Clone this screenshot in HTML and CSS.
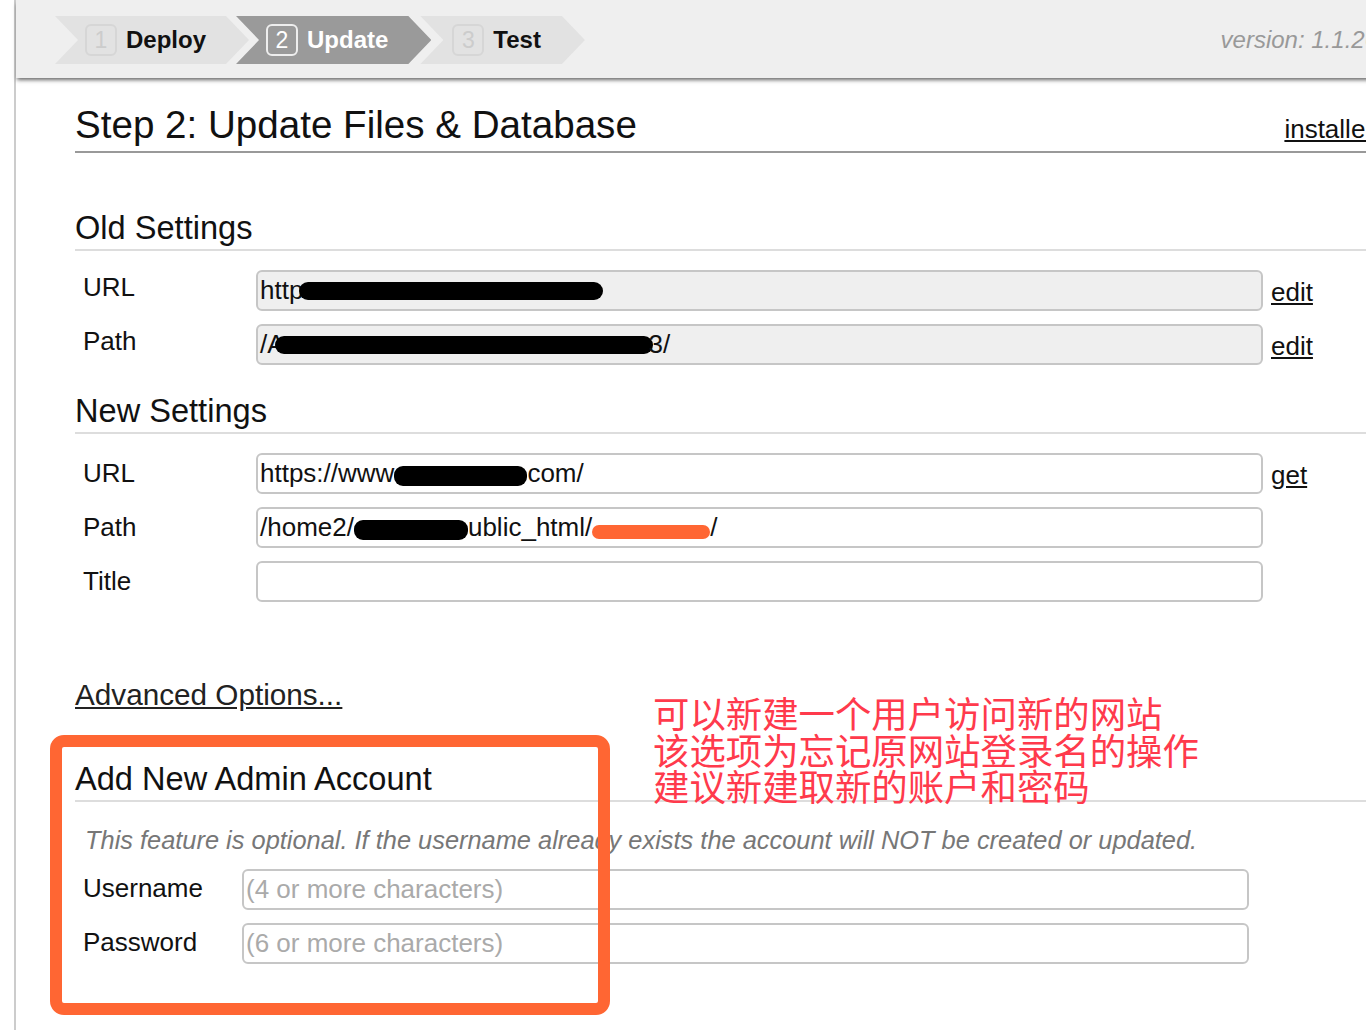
FILE: index.html
```html
<!DOCTYPE html>
<html lang="en">
<head>
    <meta charset="UTF-8">
    <meta name="viewport" content="width=device-width, initial-scale=1.0">
    <title>Installer - Update</title>
    <link rel="stylesheet" href="styles.css">
</head>
<body>
    <div class="page">
        <div class="topbar">
            <div class="steps">
                <div class="step"><span class="num">1</span>Deploy</div>
                <div class="step active"><span class="num">2</span>Update</div>
                <div class="step last"><span class="num">3</span>Test</div>
            </div>
            <div class="version">version: 1.1.26</div>
        </div>

        <div class="content">
            <div class="title-row">
                <h1>Step 2: Update Files &amp; Database</h1>
                <a href="#" class="installer">installer</a>
            </div>

            <h2 class="section first">Old Settings</h2>
            <div class="fields">
                <div class="lbl">URL</div>
                <div class="box readonly">http<span class="redact r1"></span></div>
                <a href="#" class="act">edit</a>

                <div class="lbl">Path</div>
                <div class="box readonly">/A<span class="redact r2"></span>3/</div>
                <a href="#" class="act">edit</a>
            </div>

            <h2 class="section">New Settings</h2>
            <div class="fields new-fields">
                <div class="lbl">URL</div>
                <div class="box">https://www<span class="redact r3"></span>com/</div>
                <a href="#" class="act">get</a>

                <div class="lbl">Path</div>
                <div class="box">/home2/<span class="redact r4"></span>ublic_html/<span class="redact orange"></span>/</div>
                <span></span>

                <div class="lbl">Title</div>
                <div class="box"></div>
                <span></span>
            </div>

            <p class="advanced"><a href="#">Advanced Options...</a></p>

            <h2 class="section admin">Add New Admin Account</h2>
            <p class="hint">This feature is optional. If the username already exists the account will NOT be created or updated.</p>
            <div class="fields admin-fields">
                <div class="lbl">Username</div>
                <div class="box"><span class="placeholder">(4 or more characters)</span></div>
                <span></span>

                <div class="lbl">Password</div>
                <div class="box"><span class="placeholder">(6 or more characters)</span></div>
                <span></span>
            </div>
        </div>

        <!-- annotation drawn on top of the screenshot -->
        <div class="mark-box"></div>
        <p class="note-cn">可以新建一个用户访问新的网站<br>该选项为忘记原网站登录名的操作<br>建议新建取新的账户和密码</p>
    </div>
</body>
</html>
```

FILE: styles.css
```css
@charset "UTF-8";
html{
    overflow: hidden;
}
body{
    margin: 0;
    background-color: #fff;
    color: #111;
    font-family: "Liberation Sans", Arial, sans-serif;
}
a{
    color: #111;
}
.page{
    position: relative;
    margin-left: 14px;
    border-left: 2px solid #ccc;
    width: 1400px;
    min-height: 1030px;
}

/* top bar with the wizard steps */
.topbar{
    position: relative;
    display: flex;
    align-items: flex-start;
    height: 78px;
    background-color: #efefef;
    box-shadow: 0 3px 4px -1px rgba(0, 0, 0, 0.6);
}
.steps{
    display: flex;
    padding: 16px 0 0 39px;
}
.step{
    display: flex;
    align-items: center;
    gap: 9px;
    height: 48px;
    padding: 0 43px 0 30px;
    background-color: #e2e2e2;
    font-size: 24px;
    font-weight: bold;
    clip-path: polygon(0 0, calc(100% - 23px) 0, 100% 50%, calc(100% - 23px) 100%, 0 100%, 23px 50%);
}
.step + .step{
    margin-left: -13px;
}
.step.last{
    margin-left: -11px;
    padding-left: 32px;
    padding-right: 44px;
}
.step.active{
    background-color: #9a9a9a;
    color: #fff;
}
.num{
    display: flex;
    align-items: center;
    justify-content: center;
    width: 32px;
    height: 32px;
    box-sizing: border-box;
    border: 2px solid #d6d6d6;
    border-radius: 6px;
    color: #ccc;
    font-size: 23px;
    font-weight: normal;
}
.step.active .num{
    border-color: #eee;
    color: #fff;
}
.version{
    margin-left: auto;
    padding: 26px 38px 0 0;
    color: #999;
    font-size: 24px;
    font-style: italic;
    line-height: 28px;
}

/* main form */
.content{
    padding: 25px 42px 0 59px;
}
.title-row{
    display: flex;
    justify-content: space-between;
    align-items: baseline;
    padding-bottom: 4px;
    border-bottom: 2px solid #999;
}
h1{
    margin: 0;
    font-size: 38.6px;
    font-weight: normal;
    line-height: 44px;
}
.installer{
    font-size: 26px;
}
.section{
    margin: 27px 0 0;
    padding-bottom: 2px;
    border-bottom: 2px solid #ddd;
    font-size: 32.6px;
    font-weight: normal;
    line-height: 38px;
}
.section.first{
    margin-top: 56px;
}
.section.admin{
    margin-top: 47px;
}
.fields{
    display: grid;
    grid-template-columns: 181px 1007px auto;
    row-gap: 13px;
    margin-top: 19px;
}
.admin-fields{
    grid-template-columns: 167px 1007px auto;
    margin-top: 14px;
}
.lbl{
    padding-left: 8px;
    font-size: 26px;
    line-height: 34px;
}
.new-fields .lbl{
    padding-top: 3px;
}
.admin-fields .lbl{
    padding-top: 2px;
}
.box{
    display: flex;
    align-items: center;
    height: 41px;
    box-sizing: border-box;
    padding: 0 2px;
    border: 2px solid #c6c6c6;
    border-radius: 6px;
    font-size: 26px;
    white-space: nowrap;
    overflow: hidden;
}
.box.readonly{
    background-color: #efefef;
}
.placeholder{
    color: #aaa;
}
.act{
    margin-left: 8px;
    height: 41px;
    font-size: 26px;
    line-height: 45px;
}
.redact{
    display: inline-block;
    height: 18px;
    border-radius: 9px;
    background-color: #000;
}
.r1{
    width: 304px;
    margin-left: -4px;
}
.r2{
    width: 378px;
    margin-left: -10px;
    margin-right: -4px;
}
.r3{
    width: 133px;
    height: 20px;
    margin-top: 4px;
}
.r4{
    width: 114px;
    height: 20px;
    margin-top: 4px;
}
.redact.orange{
    width: 118px;
    height: 14px;
    margin-top: 8px;
    background-color: #ff6633;
}
.advanced{
    margin: 75px 0 0;
    font-size: 29.7px;
    line-height: 36px;
}
.advanced a{
    color: #222;
}
.hint{
    margin: 23px 0 0;
    padding-left: 10px;
    color: #777;
    font-size: 25.4px;
    font-style: italic;
    line-height: 30px;
}

/* red annotation over the page */
.mark-box{
    position: absolute;
    left: 34px;
    top: 735px;
    width: 560px;
    height: 280px;
    box-sizing: border-box;
    border: 12px solid #ff6633;
    border-radius: 14px;
}
.note-cn{
    position: absolute;
    left: 637px;
    top: 694px;
    margin: 0;
    color: #ff3a4c;
    font-family: "Noto Sans CJK SC", sans-serif;
    font-size: 36.4px;
    line-height: 36.5px;
    white-space: nowrap;
}
```
